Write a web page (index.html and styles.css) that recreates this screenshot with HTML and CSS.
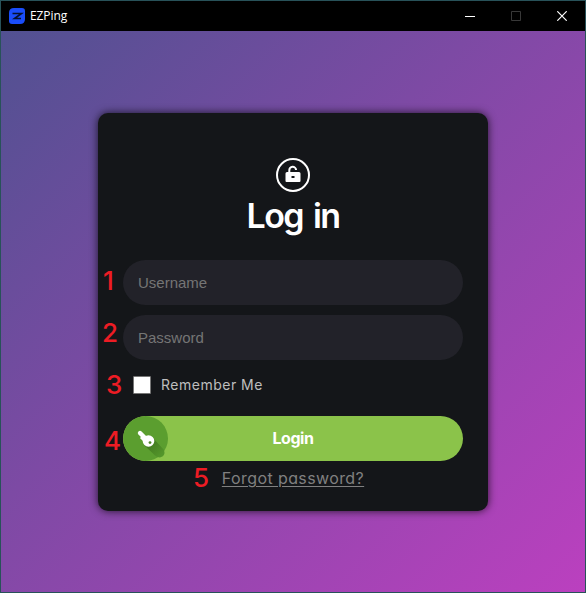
FILE: index.html
```html
<!DOCTYPE html>
<html lang="en">
<head>
<meta charset="utf-8">
<title>EZPing</title>
<link rel="stylesheet" href="styles.css">
</head>
<body>
<div class="window">
  <header class="titlebar">
    <svg class="logo" width="16" height="16" viewBox="0 0 16 16"><path fill="#1a4dfa" d="M5 0h8q3 0 3 3v8q0 5-5 5H3q-3 0-3-3V5q0-5 5-5z"/><path d="M3.500 5.500h9L5.500 10.500H12" fill="none" stroke="#06112e" stroke-width="1.600"/></svg>
    <span class="app-name">EZPing</span>
    <div class="controls">
      <svg width="10" height="10"><path fill="#fff" d="M0 5h10v1H0z"/></svg>
      <svg width="10" height="10"><path d="M.5.5h9v9h-9z" fill="none" stroke="#383838"/></svg>
      <svg width="10" height="10"><path d="M.3.3l9.4 9.4M9.7.3L.3 9.7" stroke="#fff" stroke-width="1.2"/></svg>
    </div>
  </header>
  <main class="backdrop">
    <form class="card">
      <svg class="lock" width="34" height="34" viewBox="0 0 34 34"><circle cx="17" cy="17" r="16" fill="none" stroke="#fff" stroke-width="2"/><path d="M13.300 15v-2.500a3.400 3.400 0 0 1 6.800-.5" fill="none" stroke="#fff" stroke-width="2"/><path fill="#fff" fill-rule="evenodd" d="M11 14h12q1.500 0 1.500 1.500V23q0 1-1 1H10.500q-1 0-1-1v-7.500Q9.500 14 11 14zm4.500 4v2h3v-2z"/></svg>
      <h1 class="title"><span>Log in</span></h1>
      <div class="field"><input class="input" type="text" placeholder="Username"><span class="mark mark-1">1</span></div>
      <div class="field"><input class="input" type="text" placeholder="Password"><span class="mark mark-2">2</span></div>
      <label class="remember"><span class="box"></span><span class="remember-text">Remember Me</span><span class="mark mark-3">3</span></label>
      <div class="field action">
        <button class="login" type="button">
          <svg class="key" width="45" height="45" viewBox="0 0 45 45">
            <defs><linearGradient id="shade" x1="0" y1="0" x2="1" y2="1"><stop offset="0" stop-color="#3c6f1c"/><stop offset="1" stop-color="#579b2d"/></linearGradient></defs>
            <circle cx="22.500" cy="22.500" r="22.500" fill="#5b9e2f"/>
            <path fill="url(#shade)" d="M30 22l11 12q2 6-4 7.500-3 0-5-2L21 29z"/>
            <path d="M17 17l7 7" stroke="#fff" stroke-width="4.400" stroke-linecap="round"/><path d="M18 21l3 3" stroke="#fff" stroke-width="3"/>
            <circle cx="25.500" cy="25" r="5.800" fill="#fff"/><circle cx="27" cy="26.600" r="1.400" fill="#4c8628"/>
          </svg>
          <span class="login-text">Login</span>
        </button>
        <span class="mark mark-4">4</span>
      </div>
      <div class="forgot"><a class="forgot-link">Forgot password?</a><span class="mark mark-5">5</span></div>
    </form>
  </main>
</div>
</body>
</html>
```
FILE: styles.css
```css
* { box-sizing: border-box; }
body { margin: 0; font-family: "Inter", sans-serif; font-feature-settings: "cv11" 1; }
.window { display: flex; flex-direction: column; width: 586px; height: 593px; border: 1px solid #285259; overflow: hidden; }
.titlebar { display: flex; align-items: center; height: 30px; flex: none; padding: 0 18px 0 8px; background: #000; color: #fff; }
.app-name { margin-left: 5px; font: 12px/16px "Open Sans", sans-serif; letter-spacing: -.1px; }
.controls { display: flex; gap: 36px; margin-left: auto; }
.controls svg, .logo, .lock { display: block; }
.backdrop { flex: 1; display: flex; flex-direction: column; align-items: center; padding-top: 82px; background: linear-gradient(135deg, #515191, #bb40bf); }
.card { display: flex; flex-direction: column; align-items: center; width: 390px; height: 398px; padding: 45px 25px 0; border-radius: 10px; background: #141619; box-shadow: 0 0 9px rgba(0, 0, 0, .75); }
.title { height: 50px; margin: 0 0 18px; color: #fff; font-size: 34px; line-height: 48px; font-weight: 600; letter-spacing: -1.6px; word-spacing: 3px; white-space: nowrap; }
.field { position: relative; width: 340px; height: 45px; margin-bottom: 10px; }
.input { display: block; width: 340px; height: 45px; padding: 1px 15px; border: 0; border-radius: 23px; background: #222229; font: 15px "Liberation Sans", sans-serif; color: #757575; outline: 0; }
.input::placeholder { color: #757575; opacity: 1; }
.remember { position: relative; display: flex; align-items: center; width: 340px; height: 30px; padding-left: 10px; margin-bottom: 16px; }
.box { width: 18px; height: 18px; border: 1px solid #767676; border-radius: 1px; background: #fff; }
.remember-text { margin: -1px 0 0 10px; color: #bebebe; font-size: 14px; letter-spacing: .5px; white-space: nowrap; }
.action { margin-bottom: 0; }
.login { display: grid; grid-template-columns: 45px 1fr 45px; align-items: center; width: 340px; height: 45px; padding: 0; border: 0; border-radius: 23px; overflow: hidden; background: #8bc34a; color: #fff; font: 700 16px "Inter", sans-serif; letter-spacing: -.45px; }
.login-text { margin-top: -1px; }
.key { display: block; }
.forgot { position: relative; display: flex; justify-content: center; width: 340px; height: 34px; color: #808080; }
.forgot-link { font-size: 16px; line-height: 35px; letter-spacing: .4px; text-decoration: underline; text-underline-offset: 2px; text-decoration-thickness: 1px; white-space: nowrap; }
.mark { position: absolute; color: #ed1c24; font: 500 26px/30px "Inter", sans-serif; }
.mark-1 { left: -20px; top: 6px; }
.mark-2 { left: -21px; top: 3px; }
.mark-3 { left: -17px; top: 0; }
.mark-4 { left: -19px; top: 10px; }
.mark-5 { left: 70px; top: 2px; }
```
